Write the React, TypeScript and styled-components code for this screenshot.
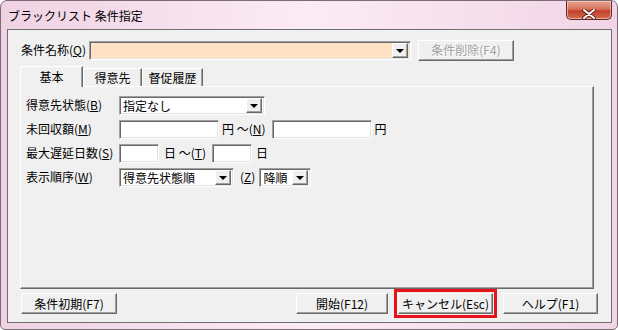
import React from 'react';
import styled, { createGlobalStyle, css } from 'styled-components';

const Global = createGlobalStyle`
  html, body { margin: 0; padding: 0; background: #ffffff; }
  body { font-family: "Noto Sans CJK JP", "Noto Sans", sans-serif; font-size: 12px; color: #000; }
  * { box-sizing: border-box; }
`;

const raised = css`
  border-style: solid;
  border-width: 1px;
  border-color: #ffffff #696969 #696969 #ffffff;
  box-shadow: inset -1px -1px 0 #a0a0a0;
`;

const sunken = css`
  border-style: solid;
  border-width: 1px;
  border-color: #a0a0a0 #ffffff #ffffff #a0a0a0;
  box-shadow: inset 1px 1px 0 #696969, inset -1px -1px 0 #e3e3e3;
`;

const Window = styled.div`
  width: 618px;
  height: 330px;
  display: flex;
  flex-direction: column;
  padding: 0 5px 6px 6px;
  border: 1px solid #7c6a75;
  border-radius: 7px 7px 5px 5px;
  background: linear-gradient(90deg, #efd2e3 0%, #f6dfec 25%, #fbebf4 50%, #f7e0ed 75%, #f1d5e6 100%);
  overflow: hidden;
`;

const TitleBar = styled.div`
  height: 28px;
  display: flex;
  align-items: center;
  justify-content: space-between;
  padding-left: 1px;
`;

const Title = styled.span`
  font-size: 12px;
  line-height: 14px;
  color: #000;
  margin-top: 1px;
`;

const CloseButton = styled.div`
  width: 46px;
  height: 19px;
  margin-top: -10px;
  border: 1px solid #5c2a24;
  border-top: none;
  border-radius: 0 0 5px 5px;
  background: linear-gradient(180deg, #e8a593 0%, #d8705e 45%, #c2402c 55%, #d46a4d 100%);
  display: flex;
  align-items: center;
  justify-content: center;
  padding-top: 9px;
  box-shadow: inset 0 0 0 1px rgba(255, 220, 210, 0.6);
`;

const Client = styled.div`
  flex: 1;
  border: 1px solid #6f6f6f;
  background: #f0f0f0;
  display: flex;
  flex-direction: column;
  padding: 10px 0 0 12px;
`;

const TopRow = styled.div`
  display: flex;
  align-items: center;
  height: 20px;
  padding-left: 1px;
`;

const Label = styled.span<{ $w?: number }>`
  display: inline-block;
  width: ${p => (p.$w ? `${p.$w}px` : 'auto')};
  line-height: 14px;
  white-space: nowrap;
  flex-shrink: 0;
`;

const Combo = styled.div<{ $w: number; $bg?: string }>`
  ${sunken};
  width: ${p => p.$w}px;
  height: 19px;
  background: ${p => p.$bg || '#ffffff'};
  display: flex;
  align-items: center;
  padding: 1px 2px 1px 3px;
  flex-shrink: 0;
`;

const ComboText = styled.span`
  flex: 1;
  min-width: 0;
  line-height: 15px;
  white-space: nowrap;
`;

const DropButton = styled.span`
  ${raised};
  width: 16px;
  height: 15px;
  background: #f0f0f0;
  display: flex;
  align-items: center;
  justify-content: center;
  flex-shrink: 0;
`;

const Arrow = styled.span`
  width: 0;
  height: 0;
  border-left: 4px solid transparent;
  border-right: 4px solid transparent;
  border-top: 4px solid #000;
  margin-top: 1px;
`;

const Button = styled.button<{ $w: number; $disabled?: boolean; $marked?: boolean }>`
  ${raised};
  width: ${p => p.$w}px;
  height: 21px;
  background: #f0f0f0;
  font-family: inherit;
  font-size: 12px;
  line-height: 14px;
  padding: 0;
  color: ${p => (p.$disabled ? '#a0a0a0' : '#000')};
  text-shadow: ${p => (p.$disabled ? '1px 1px 0 #ffffff' : 'none')};
  flex-shrink: 0;
  ${p => p.$marked && css`
    outline: 3px solid #e8121a;
    outline-offset: 1px;
  `}
`;

const TabStrip = styled.div`
  display: flex;
  align-items: flex-end;
  height: 20px;
  margin-top: 6px;
  position: relative;
  z-index: 1;
`;

const Tab = styled.div<{ $w: number; $active?: boolean }>`
  width: ${p => p.$w}px;
  height: ${p => (p.$active ? 21 : 18)}px;
  margin-bottom: ${p => (p.$active ? -1 : 0)}px;
  background: #f0f0f0;
  border-top: 1px solid #ffffff;
  border-left: 1px solid #ffffff;
  border-right: 1px solid #696969;
  box-shadow: inset -1px 0 0 #a0a0a0;
  display: flex;
  align-items: center;
  justify-content: center;
  line-height: 14px;
  padding-top: ${p => (p.$active ? 0 : 1)}px;
  font-size: 12px;
`;

const Panel = styled.div`
  ${raised};
  width: 574px;
  height: 203px;
  display: flex;
  flex-direction: column;
  padding: 6px 0 0 5px;
`;

const FormRow = styled.div`
  display: flex;
  align-items: center;
  height: 24px;
`;

const Field = styled.div<{ $w: number }>`
  ${sunken};
  width: ${p => p.$w}px;
  height: 19px;
  background: #ffffff;
  flex-shrink: 0;
`;

const Unit = styled.span<{ $l: number; $r?: number }>`
  line-height: 14px;
  margin-left: ${p => p.$l}px;
  margin-right: ${p => p.$r || 0}px;
  white-space: nowrap;
`;

const BottomRow = styled.div`
  display: flex;
  align-items: center;
  height: 21px;
  margin-top: 4px;
  padding-left: 1px;
`;

const Spacer = styled.div`
  flex: 1;
`;

const RightButtons = styled.div`
  display: flex;
  gap: 10px;
  margin-right: 13px;
`;

const Acc = ({ k }: { k: string }) => (
  <>
    (<u>{k}</u>)
  </>
);

const Select = ({ w, text, bg }: { w: number; text: string; bg?: string }) => (
  <Combo $w={w} $bg={bg}>
    <ComboText>{text}</ComboText>
    <DropButton>
      <Arrow />
    </DropButton>
  </Combo>
);

export default function App() {
  return (
    <>
      <Global />
      <Window>
        <TitleBar>
          <Title>ブラックリスト 条件指定</Title>
          <CloseButton>
            <svg width="14" height="10" viewBox="0 0 14 10">
              <path d="M2 1 L12 9 M12 1 L2 9" stroke="#5a1a12" strokeWidth="3.6" strokeLinecap="round" />
              <path d="M2 1 L12 9 M12 1 L2 9" stroke="#ffffff" strokeWidth="2" strokeLinecap="round" />
            </svg>
          </CloseButton>
        </TitleBar>
        <Client>
          <TopRow>
            <Label $w={68}>
              条件名称<Acc k="Q" />
            </Label>
            <Select w={322} text="" bg="#ffe2c4" />
            <Button $w={96} $disabled style={{ marginLeft: 7 }}>
              条件削除(F4)
            </Button>
          </TopRow>
          <TabStrip>
            <Tab $w={63} $active>基本</Tab>
            <Tab $w={59}>得意先</Tab>
            <Tab $w={61}>督促履歴</Tab>
          </TabStrip>
          <Panel>
            <FormRow>
              <Label $w={93}>
                得意先状態<Acc k="B" />
              </Label>
              <Select w={146} text="指定なし" />
            </FormRow>
            <FormRow>
              <Label $w={93}>
                未回収額<Acc k="M" />
              </Label>
              <Field $w={100} />
              <Unit $l={3} $r={6}>
                円 ～<Acc k="N" />
              </Unit>
              <Field $w={100} />
              <Unit $l={3}>円</Unit>
            </FormRow>
            <FormRow>
              <Label $w={93}>
                最大遅延日数<Acc k="S" />
              </Label>
              <Field $w={40} />
              <Unit $l={5} $r={6}>
                日 ～<Acc k="T" />
              </Unit>
              <Field $w={40} />
              <Unit $l={4}>日</Unit>
            </FormRow>
            <FormRow>
              <Label $w={93}>
                表示順序<Acc k="W" />
              </Label>
              <Select w={115} text="得意先状態順" />
              <Unit $l={6} $r={4}>
                <Acc k="Z" />
              </Unit>
              <Select w={52} text="降順" />
            </FormRow>
          </Panel>
          <BottomRow>
            <Button $w={96}>条件初期(F7)</Button>
            <Spacer />
            <RightButtons>
              <Button $w={92}>開始(F12)</Button>
              <Button $w={95} $marked>キャンセル(Esc)</Button>
              <Button $w={95}>ヘルプ(F1)</Button>
            </RightButtons>
          </BottomRow>
        </Client>
      </Window>
    </>
  );
}
